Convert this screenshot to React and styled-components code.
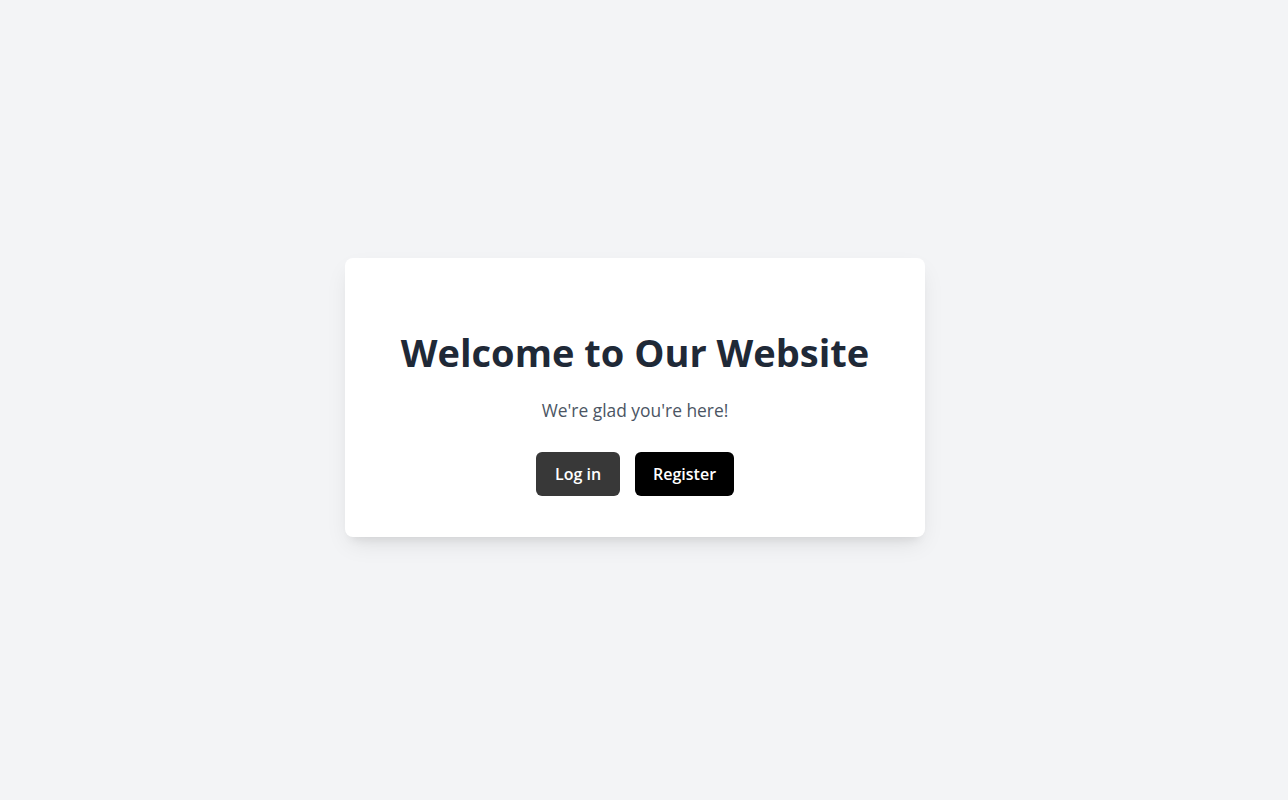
import React from 'react';
import styled, { createGlobalStyle } from 'styled-components';

const GlobalStyle = createGlobalStyle`
  html, body {
    margin: 0;
    padding: 0;
    background-color: #f3f4f6;
    font-family: "Open Sans", "Noto Sans", sans-serif;
  }
`;

const Page = styled.main`
  min-height: 100vh;
  display: flex;
  align-items: center;
  justify-content: center;
  padding: 0 18px 5px 0;
  box-sizing: border-box;
`;

const Card = styled.div`
  width: 580px;
  box-sizing: border-box;
  background-color: #ffffff;
  border-radius: 8px;
  box-shadow: 0 10px 25px -5px rgba(0, 0, 0, 0.1), 0 8px 10px -6px rgba(0, 0, 0, 0.08);
  padding: 74px 40px 41px;
  display: flex;
  flex-direction: column;
  align-items: center;
  text-align: center;
`;

const Title = styled.h1`
  margin: 0;
  color: #1f2937;
  font-size: 38px;
  line-height: 41px;
  font-weight: 700;
`;

const Subtitle = styled.p`
  margin: 23px 0 0;
  color: #4b5563;
  font-size: 17.4px;
  line-height: 28px;
`;

const Actions = styled.div`
  display: flex;
  gap: 15px;
  margin-top: 28px;
`;

const Button = styled.button`
  height: 44px;
  padding: 0 ${(p) => (p.$primary ? '18px' : '19px')};
  border: none;
  border-radius: 6px;
  font-family: inherit;
  font-size: 16px;
  font-weight: 600;
  color: #ffffff;
  background-color: ${(p) => (p.$primary ? '#000000' : '#383838')};
  cursor: pointer;
`;

export default function App() {
  return (
    <>
      <GlobalStyle />
      <Page>
        <Card>
          <Title>Welcome to Our Website</Title>
          <Subtitle>We're glad you're here!</Subtitle>
          <Actions>
            <Button>Log in</Button>
            <Button $primary>Register</Button>
          </Actions>
        </Card>
      </Page>
    </>
  );
}
